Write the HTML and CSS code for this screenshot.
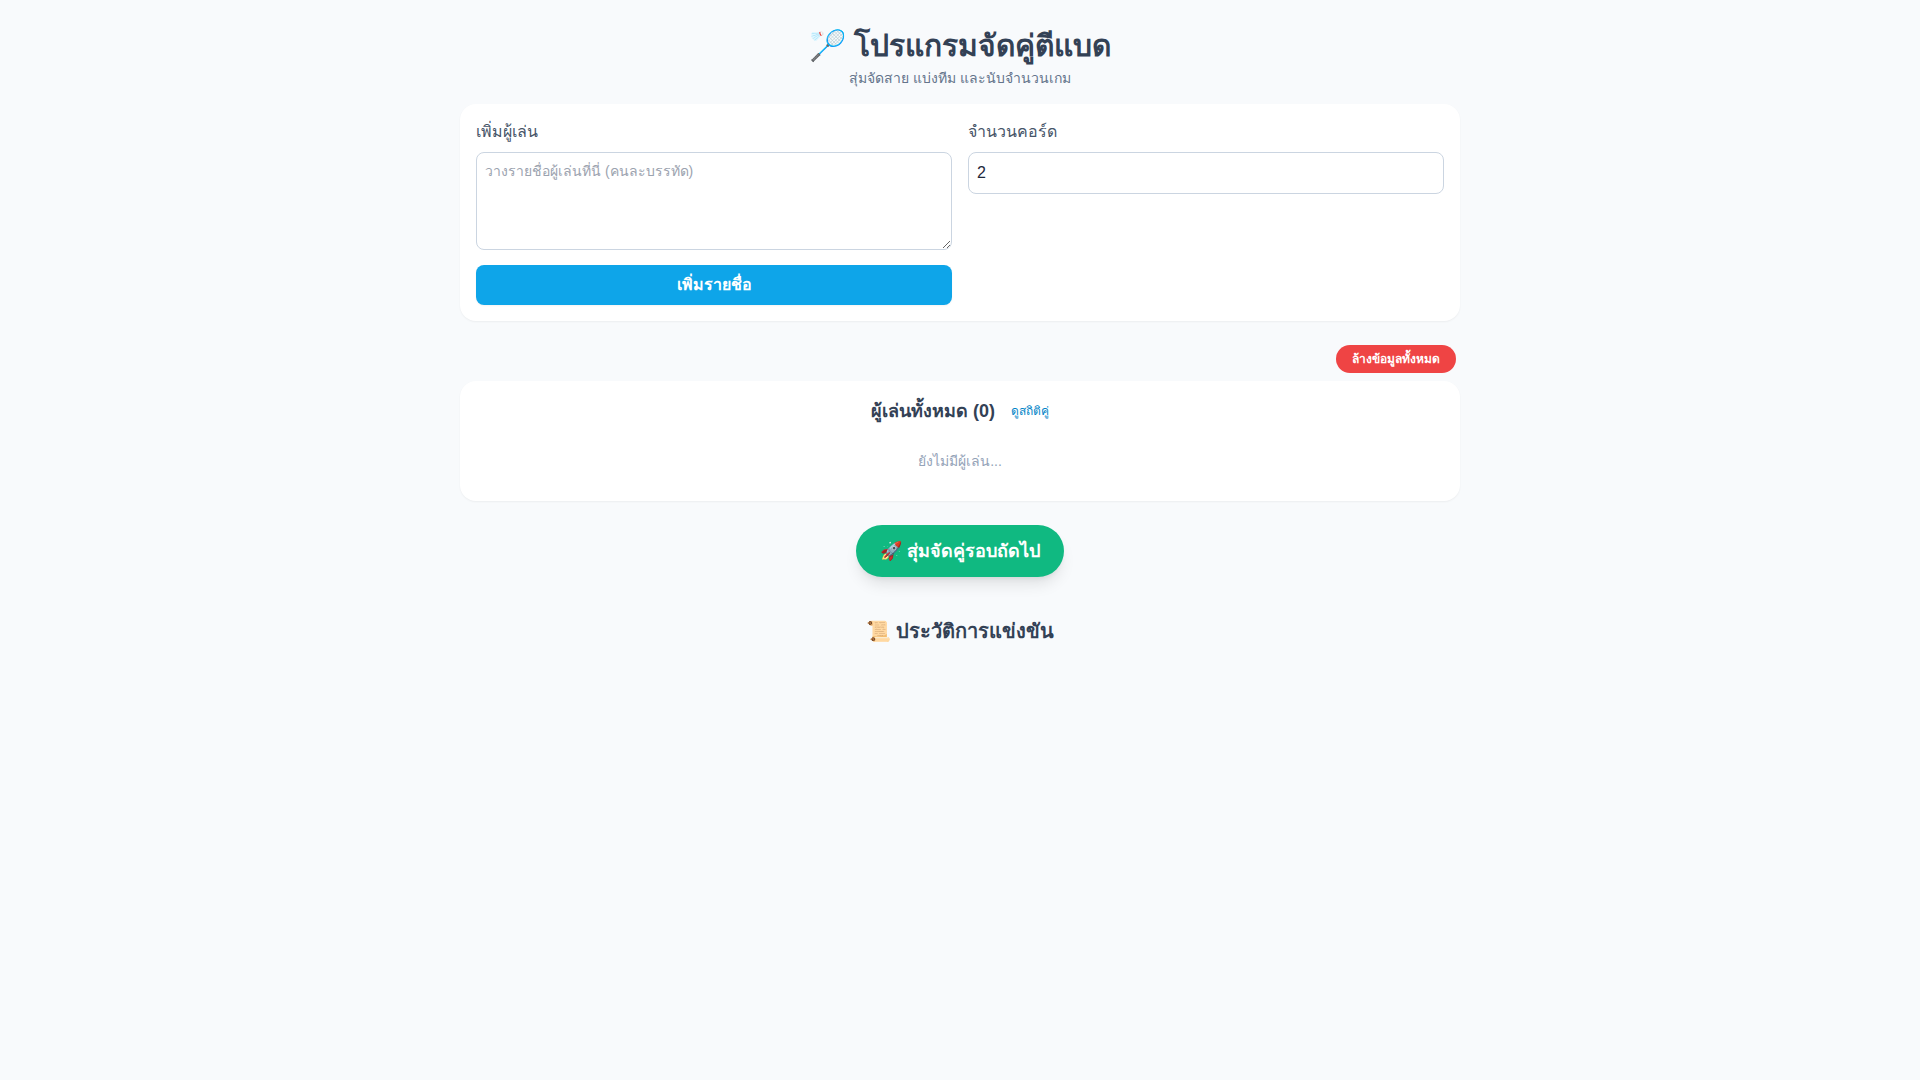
FILE: index.html
```
<!DOCTYPE html>
<html lang="th">
<head>
    <meta charset="UTF-8">
    <meta name="viewport" content="width=device-width, initial-scale=1.0">
    <title>โปรแกรมจัดคู่ตีแบด</title>
    <link rel="stylesheet" href="styles.css">
</head>
<body>
    <div class="container">
        <header>
            <h1>🏸 โปรแกรมจัดคู่ตีแบด</h1>
            <p>สุ่มจัดสาย แบ่งทีม และนับจำนวนเกม</p>
        </header>

        <!-- Setup -->
        <section class="card setup">
            <div>
                <label for="player-names">เพิ่มผู้เล่น</label>
                <textarea id="player-names" placeholder="วางรายชื่อผู้เล่นที่นี่ (คนละบรรทัด)"></textarea>
                <button class="add-button" type="button">เพิ่มรายชื่อ</button>
            </div>
            <div>
                <label for="court-count">จำนวนคอร์ด</label>
                <input type="number" id="court-count" value="2" min="1">
            </div>
        </section>

        <div class="toolbar">
            <button class="clear-button" type="button">ล้างข้อมูลทั้งหมด</button>
        </div>

        <!-- Players -->
        <section class="card players">
            <div class="players-header">
                <h2>ผู้เล่นทั้งหมด (0)</h2>
                <button class="stats-button" type="button">ดูสถิติคู่</button>
            </div>
            <p class="empty">ยังไม่มีผู้เล่น...</p>
        </section>

        <div class="action">
            <button class="random-button" type="button">🚀 สุ่มจัดคู่รอบถัดไป</button>
        </div>

        <h2 class="history-title">📜 ประวัติการแข่งขัน</h2>
    </div>
</body>
</html>
```
FILE: styles.css
```
* {
    box-sizing: border-box;
}
body {
    margin: 0;
    background-color: #f8fafc;
    color: #334155;
    font-family: "Liberation Sans", Arial, sans-serif;
    font-size: 16px;
    line-height: 24px;
}
h1, h2, p {
    margin: 0;
}
button, input, textarea {
    font-family: inherit;
}
button {
    border: none;
    cursor: pointer;
}
.container {
    max-width: 1032px;
    margin: 0 auto;
    padding: 24px 16px;
}
header {
    text-align: center;
    margin-bottom: 16px;
}
header h1 {
    font-size: 30px;
    line-height: 44px;
}
header p {
    font-size: 14px;
    line-height: 20px;
    color: #64748b;
}
.card {
    background-color: #fff;
    border-radius: 16px;
    padding: 16px;
    box-shadow: 0 1px 2px rgba(0, 0, 0, 0.05);
}
.setup {
    display: grid;
    grid-template-columns: 1fr 1fr;
    gap: 16px;
}
.setup label {
    display: block;
    margin-bottom: 8px;
    color: #475569;
}
.setup input, .setup textarea {
    display: block;
    width: 100%;
    padding: 8px;
    border: 1px solid #cbd5e1;
    border-radius: 8px;
    background-color: #fff;
    color: #1e293b;
    font-size: 16px;
    line-height: 24px;
}
.setup textarea {
    height: 98px;
    font-size: 14px;
    line-height: 20px;
}
.setup textarea::placeholder {
    color: #9ca3af;
}
.add-button {
    width: 100%;
    margin-top: 15px;
    padding: 8px;
    border-radius: 8px;
    background-color: #0ea5e9;
    color: #fff;
    font-size: 16px;
    font-weight: bold;
    line-height: 24px;
    box-shadow: 0 1px 2px rgba(0, 0, 0, 0.05);
}
.toolbar {
    display: flex;
    justify-content: flex-end;
    padding: 24px 4px 8px;
}
.clear-button {
    padding: 6px 16px;
    border-radius: 9999px;
    background-color: #ef4444;
    color: #fff;
    font-size: 12px;
    font-weight: bold;
    line-height: 16px;
}
.players {
    text-align: center;
}
.players-header {
    display: flex;
    justify-content: center;
    align-items: center;
    gap: 16px;
    margin-bottom: 12px;
}
h2 {
    font-size: 18px;
    line-height: 28px;
}
.stats-button {
    padding: 0;
    background: none;
    color: #0284c7;
    font-size: 12px;
    line-height: 16px;
}
.empty {
    padding: 16px 0;
    color: #94a3b8;
    font-size: 14px;
    line-height: 16px;
}
.action {
    margin: 24px 0 40px;
    text-align: center;
}
.random-button {
    padding: 12px 24px;
    border-radius: 9999px;
    background-color: #10b981;
    color: #fff;
    font-size: 18px;
    font-weight: bold;
    line-height: 28px;
    box-shadow: 0 10px 15px -3px rgba(0, 0, 0, 0.1), 0 4px 6px -4px rgba(0, 0, 0, 0.1);
}
.history-title {
    font-size: 20px;
    line-height: 28px;
    text-align: center;
}
```
